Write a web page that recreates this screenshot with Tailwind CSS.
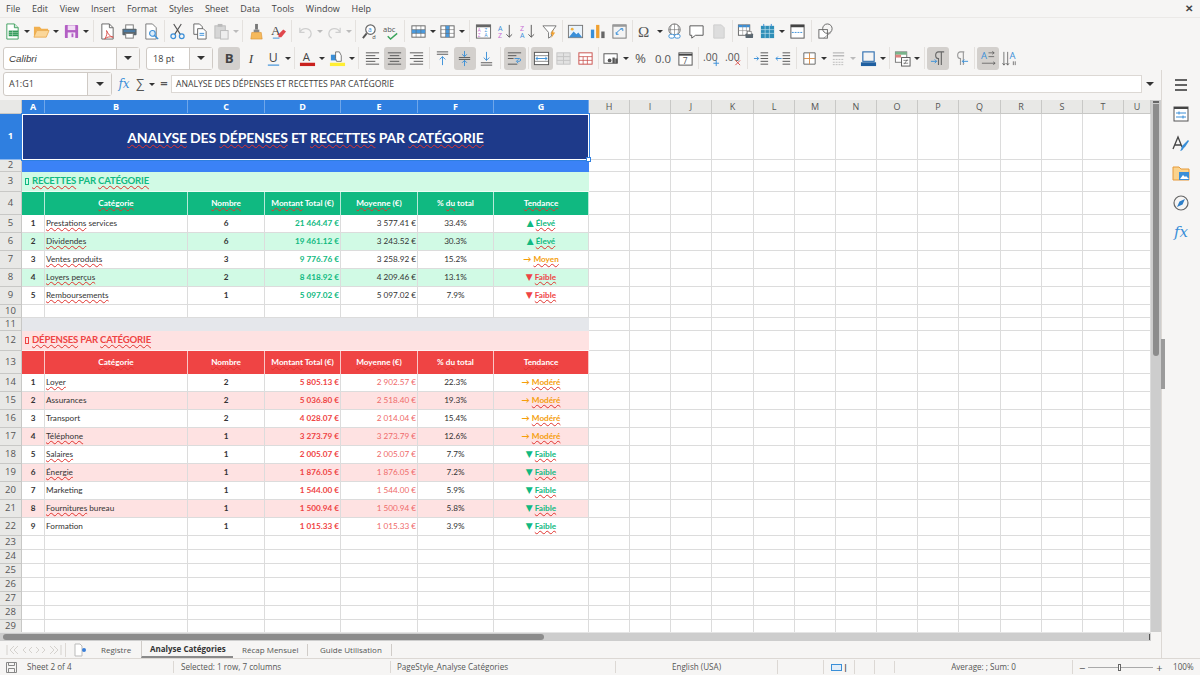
<!DOCTYPE html>
<html lang="en">
<head>
  <meta charset="UTF-8" />
  <title>Analyse Catégories - Calc</title>
  <script src="https://cdn.jsdelivr.net/npm/@tailwindcss/browser@4"></script>
</head>
<body class="w-[1200px] h-[675px] overflow-hidden bg-[#f6f5f4] text-[#3d3d3d] font-['Open_Sans',sans-serif]">

  <!-- MENU BAR -->
  <div class="h-[17px] flex items-center pl-[6px] text-[9px] gap-[11.7px] text-[#444]">
    <span>File</span><span>Edit</span><span>View</span><span>Insert</span><span>Format</span><span>Styles</span><span>Sheet</span><span>Data</span><span>Tools</span><span>Window</span><span>Help</span>
    <span class="ml-auto mr-[7px] text-[10px] font-bold">✕</span>
  </div>

  <!-- TOOLBARS -->
  <div id="bar1" class="h-[27px] flex items-center pl-px border-t border-[#ebe9e7]"></div>
  <div class="h-[28px] flex items-center pl-[3px]">
    <div class="w-[137px] h-[23px] flex bg-white border border-[#cfcac5] rounded-[3px] text-[9.8px] italic font-['Liberation_Sans',sans-serif]">
      <span class="flex-1 pl-[5px] leading-[21px]">Calibri</span>
      <span class="w-[23px] bg-[#f6f5f4] border-l border-[#cfcac5] flex items-center justify-center"><span class="w-0 h-0 border-x-[4px] border-x-transparent border-t-[4px] border-t-[#333]"></span></span>
    </div>
    <div class="ml-[6px] w-[67px] h-[23px] flex bg-white border border-[#cfcac5] rounded-[3px] text-[9px]">
      <span class="flex-1 pl-[6px] leading-[21px]">18 pt</span>
      <span class="w-[23px] bg-[#f6f5f4] border-l border-[#cfcac5] flex items-center justify-center"><span class="w-0 h-0 border-x-[4px] border-x-transparent border-t-[4px] border-t-[#333]"></span></span>
    </div>
    <div id="bar2" class="flex items-center ml-[5px]"></div>
  </div>

  <div class="flex h-[586px]">
    <div class="w-[1161px] flex flex-col">
      <!-- FORMULA BAR -->
      <div class="h-[28px] flex items-center pl-[3px] pb-[4px]">
        <div class="w-[109px] h-[24px] flex bg-white border border-[#cfcac5] rounded-[3px] text-[9px]">
          <span class="flex-1 pl-[5px] leading-[22px]">A1:G1</span>
          <span class="w-[24px] bg-[#f6f5f4] border-l border-[#cfcac5] flex items-center justify-center"><span class="w-0 h-0 border-x-[4px] border-x-transparent border-t-[4px] border-t-[#333]"></span></span>
        </div>
        <span class="ml-[4px] w-[16px] text-center text-[#3a8fd8] italic text-[12px] font-['DejaVu_Serif',serif]">fx</span>
        <span class="w-[16px] text-center text-[13px] text-[#555]">∑</span>
        <span class="ml-[1px] w-0 h-0 border-x-[3px] border-x-transparent border-t-[3px] border-t-[#333]"></span>
        <span class="ml-[3px] w-[12px] text-center text-[13px] font-bold text-[#555]">=</span>
        <div class="ml-[1px] w-[971px] h-[18px] bg-white border border-[#dcd8d4] text-[8.65px] leading-[16px] pl-[4px]">ANALYSE DES DÉPENSES ET RECETTES PAR CATÉGORIE</div>
        <span class="ml-[4px] w-0 h-0 border-x-[4px] border-x-transparent border-t-[4px] border-t-[#333]"></span>
      </div>

      <!-- SHEET + VERTICAL SCROLLBAR -->
      <div class="h-[532px] flex overflow-hidden">
        <div id="sheet" class="w-[1151px] h-[532px] overflow-hidden bg-white grid grid-cols-[22px_23px_143px_77px_76px_77px_76px_95px_41px_41px_41px_42px_41px_41px_41px_41px_41px_42px_41px_41px_41px_27px] grid-rows-[14px_46px_12px_20px_23px_18px_18px_18px_18px_18px_13px_13px_20px_23px_18px_18px_18px_18px_18px_18px_18px_18px_18px_14px_14px_14px_14px_14px_14px_14px] font-['Lato',sans-serif]"></div>
        <div class="relative w-[10px] bg-[#cdcdcd]">
          <div class="absolute left-[2px] top-px w-[6px] h-[2px] bg-[#666]"></div>
          <div class="absolute left-[2px] top-[4px] w-[6px] h-[252px] bg-[#8c8c8c] rounded-b-[3px]"></div>
        </div>
      </div>

      <!-- HORIZONTAL SCROLLBAR -->
      <div class="h-[9px] w-[1151px] bg-[#cdcdcd] flex items-center pl-[3px] border-t border-[#e5e5e5]">
        <div class="w-[541px] h-[6px] bg-[#8c8c8c] rounded-[3px]"></div>
        <div class="ml-auto mr-px w-px h-[6px] bg-[#555]"></div>
      </div>

      <!-- SHEET TABS -->
      <div class="h-[17px] flex items-center text-[8px] text-[#555]">
        <div class="w-[66px] h-[14px] pl-[6px] border-r border-[#dcd8d4] flex items-center">
          <svg class="w-[56px] h-[10px]" viewBox="0 0 56 10" fill="none" stroke="#d5d2ce"><path d="M1 0v10M8 1 4 5l4 4M12 1 8 5l4 4M20 2 17 5l3 3M26 2 23 5l3 3M30 2l3 3-3 3M36 2l3 3-3 3M44 1l4 4-4 4M48 1l4 4-4 4M55 0v10"/></svg>
        </div>
        <svg class="ml-[8px] w-[12px] h-[14px]" viewBox="0 0 12 14"><path d="M1 1h5l2 2v10H1z" fill="#fff" stroke="#bbb"/><circle cx="10" cy="7" r="2" fill="#3a7fd8"/></svg>
        <span class="ml-[15px] w-[40px]">Registre</span>
        <span class="w-[92px] h-[17px] leading-[15px] pl-[8px] font-bold text-[#333] border-l border-b-2 border-[#d0ccc8] border-b-[#8a8a8a]">Analyse Catégories</span>
        <span class="ml-[9px] w-[66px] border-r border-[#d0ccc8]">Récap Mensuel</span>
        <span class="ml-[12px] w-[72px] border-r border-[#d0ccc8]">Guide Utilisation</span>
      </div>
    </div>

    <!-- SIDEBAR -->
    <div class="relative w-[39px] -mt-[2px] border-l border-[#dcd8d4] flex flex-col items-center pt-[5px] gap-[9.4px]">
      <div class="absolute -left-px top-[269px] w-[4px] h-[50px] bg-[#9b9b9b]"></div>
      <svg class="w-[20px] h-[20px]" viewBox="0 0 20 20"><path d="M4 5h12M4 10h12M4 15h12" stroke="#333" stroke-width="1.6"/></svg>
      <svg class="w-[20px] h-[20px]" viewBox="0 0 20 20"><rect x="3" y="3" width="14" height="14" fill="#fff" stroke="#555"/><path d="M3 4h14" stroke="#444" stroke-width="2"/><path d="M5 9h10M5 13h10" stroke="#3a8fd8"/><path d="M8 7.500v3M12 11.500v3" stroke="#3a8fd8"/></svg>
      <svg class="w-[20px] h-[20px]" viewBox="0 0 20 20"><path d="M2 15 7 3l4 10M4 11h6" fill="none" stroke="#444" stroke-width="1.3"/><path d="M9 17c3 0 3-3 5-4l4-6-1-1-5 5c-2 1-1 4-3 6z" fill="#3a8fd8"/></svg>
      <svg class="w-[20px] h-[20px]" viewBox="0 0 20 20"><path d="M2 4h6l2 2h8v11H2z" fill="#fbd38d" stroke="#e69a3a"/><rect x="8" y="9" width="10" height="8" fill="#3a8fd8"/><path d="M9 16l3-4 2 2 1-1 3 3z" fill="#fff"/></svg>
      <svg class="w-[20px] h-[20px]" viewBox="0 0 20 20"><circle cx="10" cy="10" r="7" fill="none" stroke="#666" stroke-width="1.2"/><path d="M14 6 11.500 11.500 6 14 8.500 8.500z" fill="#2f7fc8"/></svg>
      <span class="h-[20px] leading-[20px] italic text-[15px] text-[#3a8fd8] font-['DejaVu_Serif',serif]">fx</span>
    </div>
  </div>

  <!-- STATUS BAR -->
  <div class="h-[17px] flex items-center border-t border-[#dcd8d4] text-[8.1px] text-[#555] whitespace-nowrap">
    <svg class="ml-[6px] w-[11px] h-[11px] shrink-0" viewBox="0 0 11 11"><path d="M.5.500h10v10H.5zM2.500.500v3h6v-3M2.500 10.500v-4h6v4" fill="none" stroke="#888"/></svg>
    <span class="ml-[10px] w-[146px] shrink-0">Sheet 2 of 4</span>
    <span class="pl-[7px] w-[217px] shrink-0 border-l border-[#dcd8d4]">Selected: 1 row, 7 columns</span>
    <span class="pl-[6px] w-[225px] shrink-0 border-l border-[#dcd8d4]">PageStyle_Analyse Catégories</span>
    <span class="w-[162px] shrink-0 text-center border-l border-[#dcd8d4]">English (USA)</span>
    <span class="w-[46px] shrink-0 h-[14px] border-l border-[#dcd8d4]"></span>
    <span class="w-[31px] shrink-0 flex items-center justify-center border-l border-[#dcd8d4] h-[14px]"><span class="inline-block w-[11px] h-[7px] border border-[#3a8fd8] bg-[#e3eef9]"></span><span class="ml-[2px] text-[11px] leading-[11px]">I</span></span>
    <span class="w-[20px] shrink-0 h-[14px] border-l border-[#dcd8d4]"></span>
    <span class="w-[20px] shrink-0 h-[14px] border-l border-[#dcd8d4]"></span>
    <span class="w-[178px] shrink-0 text-center border-l border-[#dcd8d4]">Average: ; Sum: 0</span>
    <span class="w-[100px] shrink-0 flex items-center border-l border-[#dcd8d4] h-[14px]">
      <span class="ml-[6px] text-[11px] leading-[11px]">−</span>
      <span class="relative ml-[3px] w-[65px] h-px bg-[#aaa]"><span class="absolute left-[30px] -top-[3px] w-[3px] h-[7px] border border-[#666] bg-white"></span></span>
      <span class="ml-[3px] text-[11px] leading-[11px]">+</span>
    </span>
    <span class="ml-px">100%</span>
  </div>

  <script>
    // toolbar icons, all drawn on an 18x18 box
    const ICONS = {
      calc: '<path d="M3 1h8l4 4v12H3z" fill="#fff" stroke="#3f9f5f"/><path d="M11 1v4h4" fill="#cfe8d6" stroke="#3f9f5f"/><rect x="5" y="8" width="10" height="6" fill="#2f9a57"/><path d="M5 10h10M5 12h10M9 8v6" stroke="#cfe8d6" stroke-width=".5"/>',
      open: '<path d="M1 4h6l2 2h7v2H4l-3 7z" fill="#f1b04f"/><path d="M1 15l3-7h13l-3 7z" fill="#fbd79a" stroke="#e9a544" stroke-width=".8"/>',
      save: '<rect x="2" y="2" width="14" height="14" rx="1" fill="#b35fc4"/><rect x="5" y="2.500" width="8" height="5" fill="#f0dcf4"/><rect x="5" y="10" width="8" height="6" fill="#f6ecf8"/><rect x="9" y="11" width="2" height="4" fill="#b35fc4"/>',
      pdf: '<path d="M3 1h8l4 4v12H3z" fill="#fff" stroke="#666"/><path d="M11 1v4h4" fill="none" stroke="#666"/><path d="M8 8c2 4 3 6 7 7-4-1-7 0-9 2 2-3 3-6 2-9z" fill="none" stroke="#d9534f"/>',
      print: '<rect x="5" y="2" width="8" height="5" fill="#fff" stroke="#777"/><rect x="1.500" y="6" width="15" height="7" rx="1" fill="#5a6770"/><rect x="5" y="11" width="8" height="5" fill="#fff" stroke="#777"/><rect x="3" y="8" width="12" height="1" fill="#3a8fd8"/>',
      preview: '<path d="M3 1h7l4 4v12H3z" fill="#fff" stroke="#777"/><circle cx="10" cy="11" r="3" fill="#dcecf9" stroke="#3a8fd8" stroke-width="1.200"/><path d="M12 13l4 4" stroke="#3a8fd8" stroke-width="1.500"/>',
      cut: '<path d="M5 1l7 11M13 1L6 12" stroke="#555" stroke-width="1.200"/><circle cx="4.500" cy="14" r="2.500" fill="none" stroke="#3a8fd8" stroke-width="1.300"/><circle cx="13.500" cy="14" r="2.500" fill="none" stroke="#3a8fd8" stroke-width="1.300"/>',
      copy: '<path d="M3 1h6l3 3v8H3z" fill="#fff" stroke="#666"/><path d="M7 6h6l3 3v8H7z" fill="#fff" stroke="#666"/><path d="M9 11h5M9 13h5" stroke="#3a8fd8"/>',
      paste: '<rect x="2" y="3" width="11" height="13" fill="#d6d6d6" stroke="#bbb"/><rect x="5" y="1" width="5" height="3" fill="#bbb"/><rect x="8" y="8" width="8" height="9" fill="#eee" stroke="#bbb"/>',
      clone: '<rect x="7.500" y="1" width="3" height="6" fill="#777"/><path d="M6 7h6v3H6z" fill="#888"/><path d="M4 10h10l1 7H3z" fill="#f5b95c" stroke="#d98e2b" stroke-width=".6"/>',
      clear: '<text x="1" y="13" font-size="14" fill="#444" font-family="Liberation Serif">A</text><path d="M9 12l5-5 3 2-5 6H9z" fill="#e0474c"/><path d="M3 16h7" stroke="#3a8fd8"/>',
      undo: '<path d="M3 5v5h5M3 10c3-6 11-5 12 1 0 2-1 4-3 5" fill="none" stroke="#cfcfcf" stroke-width="1.300"/>',
      redo: '<path d="M15 5v5h-5M15 10c-3-6-11-5-12 1 0 2 1 4 3 5" fill="none" stroke="#cfcfcf" stroke-width="1.300"/>',
      find: '<circle cx="10" cy="7" r="5" fill="#fff" stroke="#666" stroke-width="1.200"/><path d="M6 11l-4 5" stroke="#555" stroke-width="2"/><text x="7.500" y="9.500" font-size="7" fill="#3a8fd8">a</text><text x="12" y="16.500" font-size="6" fill="#444">d</text>',
      spell: '<text x="0" y="9" font-size="8" fill="#555">abc</text><path d="M5 14l3 3 7-6" fill="none" stroke="#3ba55c" stroke-width="1.500"/>',
      rows: '<rect x="2" y="3" width="14" height="12" fill="#fff" stroke="#666"/><rect x="2" y="7" width="14" height="4" fill="#4a9be0"/><path d="M2 7h14M2 11h14M6.500 3v12M11.500 3v12" stroke="#666" stroke-width=".6"/>',
      cols: '<rect x="2" y="3" width="14" height="12" fill="#fff" stroke="#666"/><rect x="7" y="3" width="4" height="12" fill="#4a9be0"/><path d="M2 7h14M2 11h14M7 3v12M11 3v12" stroke="#666" stroke-width=".6"/>',
      sort: '<rect x="1.500" y="2" width="15" height="14" fill="#fff" stroke="#666"/><rect x="1.500" y="2" width="15" height="2.500" fill="#666"/><text x="3" y="9.500" font-size="5" fill="#c66fd4">A</text><text x="10" y="9.500" font-size="5" fill="#3a8fd8">Z</text><text x="3" y="15" font-size="5" fill="#c66fd4">Z</text><text x="10" y="15" font-size="5" fill="#3a8fd8">A</text>',
      asc: '<text x="1" y="8" font-size="7.500" fill="#3a8fd8">A</text><text x="1" y="16" font-size="7.500" fill="#c66fd4">Z</text><path d="M13 2v13M10 12l3 3 3-3" fill="none" stroke="#555"/>',
      desc: '<text x="1" y="8" font-size="7.500" fill="#c66fd4">Z</text><text x="1" y="16" font-size="7.500" fill="#3a8fd8">A</text><path d="M13 2v13M10 12l3 3 3-3" fill="none" stroke="#555"/>',
      filter: '<path d="M2 3h14l-5 7v4l-3 2v-6z" fill="#fff" stroke="#777"/><path d="M13 7l-3 5h2l-1 4 4-6h-2z" fill="#f0a030"/>',
      image: '<rect x="1.500" y="2.500" width="15" height="13" fill="#eaf3fb" stroke="#777"/><circle cx="5.500" cy="6.500" r="1.500" fill="#f0b040"/><path d="M2 15l5-6 3 3 2-2 4 5z" fill="#3a8fd8"/>',
      chart: '<rect x="2" y="7" width="3.500" height="9" fill="#3a8fd8"/><rect x="7.500" y="2" width="3.500" height="14" fill="#f0a030"/><rect x="13" y="9" width="3.500" height="7" fill="#666"/>',
      pivot: '<rect x="2" y="2" width="14" height="14" fill="#f4f4f4" stroke="#777"/><rect x="2" y="2" width="14" height="2" fill="#999"/><path d="M6 12c0-3 3-5 6-6M10 6h2.500v2.500M8 12H5.500V9.500" fill="none" stroke="#3a8fd8"/>',
      omega: '<text x="1" y="15" font-size="16" fill="#555" font-family="Liberation Serif">Ω</text>',
      link: '<circle cx="9" cy="7" r="6" fill="#fff" stroke="#666"/><path d="M3 7h12M9 1v12M5.500 2.500c-1 3-1 6 0 9M12.500 2.500c1 3 1 6 0 9" fill="none" stroke="#666" stroke-width=".6"/><rect x="3" y="12" width="6" height="4" rx="2" fill="#fff" stroke="#3a8fd8"/><rect x="9" y="12" width="6" height="4" rx="2" fill="#fff" stroke="#3a8fd8"/>',
      note: '<path d="M2 3h14v10H8l-4 3v-3H2z" fill="#fff" stroke="#555"/>',
      header: '<path d="M4 2h8l3 3v11H4z" fill="#ddd" stroke="#ccc"/>',
      range: '<rect x="1.500" y="2" width="12" height="11" fill="#fff" stroke="#666"/><rect x="1.500" y="2" width="12" height="2.500" fill="#3a8fd8"/><path d="M1.500 8h12M6 2v11M10 2v11" stroke="#888" stroke-width=".6"/><rect x="9" y="11" width="8" height="5" rx="1" fill="#5a6770"/><rect x="11" y="9" width="4" height="3" fill="#fff" stroke="#666" stroke-width=".6"/>',
      freeze: '<rect x="2" y="3" width="14" height="13" fill="#2f8fb8"/><path d="M2 7h14M2 11h14M6.500 3v13M11 3v13" stroke="#bfe0ee" stroke-width=".7"/><path d="M5 1v3M13 1v3" stroke="#3a8fd8"/>',
      split: '<rect x="2" y="2" width="14" height="14" fill="#fff" stroke="#555"/><rect x="2" y="2" width="14" height="2.500" fill="#444"/><path d="M3 10h12" stroke="#3a8fd8" stroke-dasharray="2 1"/>',
      shapes: '<rect x="2" y="7" width="9" height="9" fill="#fff" stroke="#666"/><circle cx="11" cy="6" r="5" fill="none" stroke="#666"/><path d="M7 16l8-6" stroke="#666" stroke-width=".6"/>',
      bold: '<text x="4" y="14" font-size="14" font-weight="700" fill="#444">B</text>',
      italic: '<text x="6" y="14" font-size="14" font-style="italic" fill="#444" font-family="Liberation Serif">I</text>',
      under: '<text x="4" y="13" font-size="13" fill="#444">U</text><path d="M3 16h12" stroke="#3a8fd8" stroke-width="1.200"/>',
      color: '<text x="4" y="12" font-size="12" fill="#444">A</text><rect x="1" y="13.500" width="16" height="3.500" fill="#c9211e"/>',
      hilite: '<rect x="1" y="13.500" width="16" height="3.500" fill="#ffee33"/><rect x="2" y="5" width="7" height="6" fill="#3a8fd8"/><path d="M7 9V2h4l2 4v6H8z" fill="#fff" stroke="#555" stroke-width=".8"/>',
      left: '<path d="M2 3h14M2 6h10M2 9h14M2 12h10M2 15h14" stroke="#555"/>',
      center: '<path d="M2 3h14M4 6h10M2 9h14M4 12h10M2 15h14" stroke="#555"/>',
      right: '<path d="M2 3h14M6 6h10M2 9h14M6 12h10M2 15h14" stroke="#555"/>',
      top: '<path d="M3 2h12M3 4.500h12" stroke="#555"/><path d="M9 16V7M6 10l3-3 3 3" fill="none" stroke="#3a8fd8"/>',
      mid: '<path d="M3 8h12M3 10h12" stroke="#555"/><path d="M9 1v6M6.500 4.500 9 7l2.500-2.500M9 17v-6M6.500 13.500 9 11l2.500 2.500" fill="none" stroke="#3a8fd8"/>',
      bot: '<path d="M3 13.500h12M3 16h12" stroke="#555"/><path d="M9 2v9M6 8l3 3 3-3" fill="none" stroke="#3a8fd8"/>',
      wrap: '<path d="M2 3h14M2 6h9M2 9h6M2 15h10" stroke="#555"/><path d="M9 9h5c2 0 2 3 0 3h-2M13 10l-2 2 2 2" fill="none" stroke="#3a8fd8"/>',
      merge: '<rect x="1.500" y="2.500" width="15" height="13" fill="#fff" stroke="#555"/><path d="M1.500 6h15M1.500 12h15" stroke="#555" stroke-width=".7"/><path d="M3 9h12M5 7.500 3 9l2 1.500M13 7.500 15 9l-2 1.500" fill="none" stroke="#3a8fd8"/>',
      mergeoff: '<rect x="2" y="3" width="14" height="12" fill="#e2e2e2" stroke="#c4c4c4"/><path d="M2 7h14M2 11h14M9 3v12" stroke="#c4c4c4"/>',
      unmerge: '<rect x="2" y="3" width="14" height="12" fill="#fff" stroke="#c9504c"/><path d="M2 7h14M6.500 7v8M11 7v8M2 11h14" stroke="#c9504c" stroke-width=".8"/>',
      money: '<rect x="1" y="4" width="14" height="10" fill="#fff" stroke="#555"/><circle cx="7" cy="11" r="2" fill="#555"/><rect x="10" y="8" width="2.500" height="6" fill="#555"/><rect x="13" y="9" width="2.500" height="5" fill="#555"/>',
      pct: '<text x="2" y="14" font-size="14" fill="#555">%</text>',
      num: '<text x="0" y="13.500" font-size="12" fill="#555">0.0</text>',
      date: '<rect x="2" y="3" width="14" height="13" fill="#fff" stroke="#555"/><path d="M2 5h14" stroke="#444" stroke-width="2"/><text x="6" y="14.500" font-size="9" fill="#555">7</text>',
      addec: '<text x="0" y="12" font-size="11" fill="#555">.00</text><path d="M14 11v6M11 14h6" stroke="#3a8fd8"/>',
      deldec: '<text x="0" y="12" font-size="11" fill="#555">.00</text><path d="M11 11l5 5M16 11l-5 5" stroke="#d9534f"/>',
      indent: '<path d="M8 3h8M8 6h8M8 9h8M8 12h8M8 15h8" stroke="#555"/><path d="M1 9h5M4 7l2 2-2 2" fill="none" stroke="#3a8fd8"/>',
      outdent: '<path d="M8 3h8M8 6h8M8 9h8M8 12h8M8 15h8" stroke="#555"/><path d="M7 9H1M3 7 1 9l2 2" fill="none" stroke="#3a8fd8"/>',
      border: '<path d="M3 3h12v12H3z" fill="#fff" stroke="#666"/><path d="M9 3v12M3 9h12" stroke="#d98e4a"/>',
      bstyle: '<path d="M3 3h12M3 6h12" stroke="#bbb" stroke-width="1.500"/><path d="M3 10h12M3 13h12M3 15.500h12" stroke="#bbb" stroke-dasharray="2 1"/>',
      bcolor: '<rect x="3" y="2" width="12" height="10" fill="#f4f4f4" stroke="#2f6fb0" stroke-width="1.200"/><rect x="1" y="13" width="16" height="4" fill="#1f5fa0"/>',
      cond: '<rect x="1.500" y="2" width="12" height="11" fill="#fff" stroke="#777"/><rect x="1.500" y="2" width="12" height="3" fill="#79b48a"/><rect x="1.500" y="5" width="6" height="3" fill="#e0837f"/><rect x="8" y="8" width="9" height="9" fill="#fff" stroke="#555"/><path d="M10 11h5M10 14h5M14 10l-3 5" stroke="#555" stroke-width=".7"/>',
      ltr: '<path d="M9 2c-4 0-4 7 0 7v7M12 2v14M9 2h6" fill="none" stroke="#666" stroke-width="1.200"/><path d="M1 12h6M5 10l2 2-2 2" fill="none" stroke="#3a8fd8"/>',
      rtl: '<path d="M9 2C5 2 5 9 9 9v7M12 2v14M9 2h4" fill="none" stroke="#999" stroke-width="1.200"/><path d="M17 12h-6M13 10l-2 2 2 2" fill="none" stroke="#3a8fd8"/>',
      horiz: '<text x="1" y="9" font-size="10" fill="#3a8fd8">A</text><path d="M9 3h6M9 7h6M2 14h14M13 1.500 15 3l-2 1.500M14 12.500l2 1.500-2 1.500" fill="none" stroke="#555" stroke-width=".8"/>',
      vert: '<text x="8" y="9" font-size="10" fill="#3a8fd8">A</text><path d="M2 2v14M6 2v14M0.500 14 2 16l1.500-2M4.500 14 6 16l1.500-2M12 12v4M14 12v4" fill="none" stroke="#555" stroke-width=".8"/>'
    };

    const SEP = {
      s4: 'w-[4px]', s5: 'w-[5px]', s6: 'w-[6px]', s7: 'w-[7px]'
    };

    function toolbar(id, items) {
      document.getElementById(id).innerHTML = items.split(' ').map(it => {
        if (it === 'v' || it === 'w') {
          const c = it === 'v' ? '#333' : '#bbb';
          return `<span class="w-[7.5px] flex justify-center"><svg class="w-[6px] h-[3px]" viewBox="0 0 6 3"><path d="M0 0h6L3 3z" fill="${c}"/></svg></span>`;
        }
        if (SEP[it]) return `<span class="${SEP[it]} h-[22px] flex justify-center"><span class="w-px h-full bg-[#e4e1de]"></span></span>`;
        const on = it.endsWith('*');
        const name = on ? it.slice(0, -1) : it;
        return `<span class="w-[22px] h-[23px] flex items-center justify-center rounded-[3px] ${on ? 'bg-[#d3d0cd]' : ''}"><svg class="w-[17px] h-[17px]" viewBox="0 0 18 18" font-family="Open Sans">${ICONS[name]}</svg></span>`;
      }).join('');
    }

    toolbar('bar1', 'calc v open v save v s7 pdf print preview s4 cut copy paste w s5 clone clear s5 undo w redo w s5 find spell s5 rows v cols v s6 sort asc desc filter s4 image chart pivot s4 omega v link note header s5 range freeze v split s6 shapes');
    toolbar('bar2', 'bold* italic under v s5 color v hilite v s6 left center* right s4 top mid* bot s6 wrap* s5 merge* mergeoff unmerge s4 money v pct num date s4 addec deldec s6 indent outdent s4 border v bstyle w bcolor v s5 cond v s6 ltr* rtl s6 horiz* vert');

    // spell check squiggle
    const w = t => `<span class="underline decoration-wavy decoration-[#e0342f] decoration-[0.6px] underline-offset-[0.5px]">${t}</span>`;
    const tri = g => `<span class="font-['DejaVu_Sans',sans-serif] text-[9px]">${g}</span>`;

    const grid = 'border-r border-b border-[#dcdcdc]';
    const rowHead = (n, on) => `<div class="flex items-center justify-center text-[9.5px] font-['Open_Sans',sans-serif] border-r border-b ${on ? "bg-[#2f7fe0] text-white font-bold border-[#8db8ee]" : "bg-[#e8e8e6] text-[#555] border-[#c8c8c6]"}">${n}</div>`;
    const blanks = n => `<div class="${grid}"></div>`.repeat(n);

    let html = '<div class="bg-[#e8e8e6] border-r border-b border-[#c8c8c6]"></div>';
    'ABCDEFG'.split('').forEach(c => { html += `<div class="bg-[#2f7fe0] text-white font-bold text-[9px] font-['Open_Sans',sans-serif] flex items-center justify-center border-r border-[#6fa6ea]">${c}</div>`; });
    'HIJKLMNOPQRSTU'.split('').forEach(c => { html += `<div class="bg-[#e8e8e6] text-[#555] text-[9px] font-['Open_Sans',sans-serif] flex items-center justify-center border-r border-b border-[#c8c8c6]">${c}</div>`; });

    // row 1 title, selected
    html += rowHead(1, true);
    html += `<div class="relative col-span-7 bg-[#1e3a8a] text-white font-bold text-[14px] tracking-[-0.15px] flex items-center justify-center border border-white outline outline-[#2f7fe0]"><span>${w('ANALYSE')} DES ${w('DÉPENSES')} ET ${w('RECETTES')} PAR ${w('CATÉGORIE')}</span><span class="absolute -right-[3px] -bottom-[3px] w-[5px] h-[5px] bg-white border border-[#2f7fe0]"></span></div>` + blanks(14);
    html += rowHead(2) + `<div class="col-span-7 bg-[#3b82f6]"></div>` + blanks(14);

    function section(n, bg, color, title) {
      return rowHead(n) + `<div class="col-span-7 ${bg} ${color} font-bold text-[9.6px] tracking-[-0.2px] flex items-center pl-[2px] border-b border-white/60"><span class="inline-block w-[4px] h-[7px] border border-current mr-[3px] ml-px"></span><span>${title}</span></div>` + blanks(14);
    }

    function headers(n, bg) {
      const names = ['', w('Catégorie'), w('Nombre'), w('Montant') + ' Total (€)', w('Moyenne') + ' (€)', '% ' + w('du') + ' total', w('Tendance')];
      return rowHead(n) + names.map(t => `<div class="${bg} text-white font-bold text-[8.2px] flex items-center justify-center border-r border-white/70"><span>${t}</span></div>`).join('') + blanks(14);
    }

    function line(n, alt, d, numColor, avgColor) {
      const bg = alt;
      const cell = 'border-r border-b border-[#dcdcdc] flex items-center text-[8.2px] whitespace-nowrap overflow-hidden';
      return rowHead(n)
        + `<div class="${cell} ${bg} justify-center font-bold text-[#333]">${d[0]}</div>`
        + `<div class="${cell} ${bg} pl-px text-[#333]"><span>${d[1]}</span></div>`
        + `<div class="${cell} ${bg} justify-center font-bold text-[#333]">${d[2]}</div>`
        + `<div class="${cell} ${bg} justify-end pr-px font-bold ${numColor}">${d[3]}</div>`
        + `<div class="${cell} ${bg} justify-end pr-px ${avgColor}">${d[4]}</div>`
        + `<div class="${cell} ${bg} justify-center text-[#333]">${d[5]}</div>`
        + `<div class="${cell} ${bg} justify-center font-bold ${d[6][0]}"><span>${d[6][1]}</span></div>`
        + blanks(14);
    }

    const UP = ['text-[#10b981]', tri('▲') + ' ' + w('Élevé')];
    const MID = ['text-[#f59e0b]', '→ ' + w('Moyen')];
    const LOW = ['text-[#ef4444]', tri('▼') + ' ' + w('Faible')];
    const MOD = ['text-[#f59e0b]', '→ ' + w('Modéré')];
    const OK = ['text-[#10b981]', tri('▼') + ' ' + w('Faible')];

    const recettes = [
      [1, w('Prestations') + ' services', 6, '21 464.47 €', '3 577.41 €', '33.4%', UP],
      [2, w('Dividendes'), 6, '19 461.12 €', '3 243.52 €', '30.3%', UP],
      [3, w('Ventes produits'), 3, '9 776.76 €', '3 258.92 €', '15.2%', MID],
      [4, w('Loyers perçus'), 2, '8 418.92 €', '4 209.46 €', '13.1%', LOW],
      [5, w('Remboursements'), 1, '5 097.02 €', '5 097.02 €', '7.9%', LOW]
    ];
    const depenses = [
      [1, w('Loyer'), 2, '5 805.13 €', '2 902.57 €', '22.3%', MOD],
      [2, 'Assurances', 2, '5 036.80 €', '2 518.40 €', '19.3%', MOD],
      [3, 'Transport', 2, '4 028.07 €', '2 014.04 €', '15.4%', MOD],
      [4, w('Téléphone'), 1, '3 273.79 €', '3 273.79 €', '12.6%', MOD],
      [5, w('Salaires'), 1, '2 005.07 €', '2 005.07 €', '7.7%', OK],
      [6, w('Énergie'), 1, '1 876.05 €', '1 876.05 €', '7.2%', OK],
      [7, 'Marketing', 1, '1 544.00 €', '1 544.00 €', '5.9%', OK],
      [8, w('Fournitures') + ' bureau', 1, '1 500.94 €', '1 500.94 €', '5.8%', OK],
      [9, 'Formation', 1, '1 015.33 €', '1 015.33 €', '3.9%', OK]
    ];

    html += section(3, 'bg-[#d1fae5]', 'text-[#10b981]', w('RECETTES') + ' PAR ' + w('CATÉGORIE'));
    html += headers(4, 'bg-[#10b981]');
    recettes.forEach((d, i) => { html += line(5 + i, i % 2 ? 'bg-[#d1fae5]' : 'bg-white', d, 'text-[#10b981]', 'text-[#333]'); });
    html += rowHead(10) + blanks(21);
    html += rowHead(11) + '<div class="col-span-7 bg-[#e5e7eb]"></div>' + blanks(14);
    html += section(12, 'bg-[#fee2e2]', 'text-[#ef4444]', w('DÉPENSES') + ' PAR ' + w('CATÉGORIE'));
    html += headers(13, 'bg-[#ef4444]');
    depenses.forEach((d, i) => { html += line(14 + i, i % 2 ? 'bg-[#fee2e2]' : 'bg-white', d, 'text-[#ef4444]', 'text-[#ef6a6a]'); });
    for (let r = 23; r <= 29; r++) html += rowHead(r) + blanks(21);

    document.getElementById('sheet').innerHTML = html;
  </script>
</body>
</html>
